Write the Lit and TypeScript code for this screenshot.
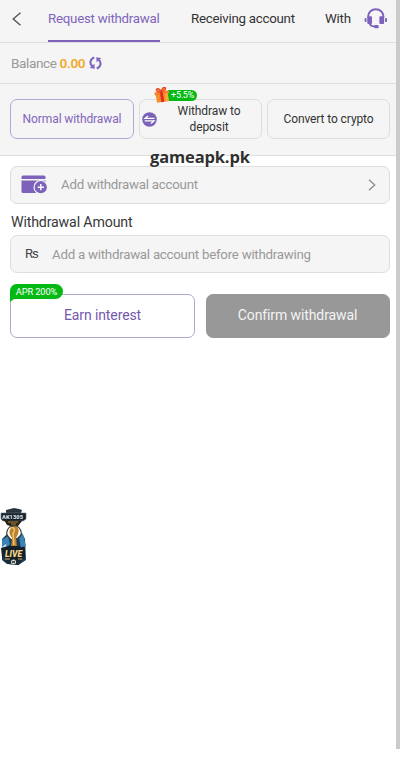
import { LitElement, html, css, svg } from "lit";
import { customElement } from "lit/decorators.js";

const backIcon = svg`<svg class="back" width="10" height="14" viewBox="0 0 10 14" fill="none" stroke="#555" stroke-width="1.4"><path d="M8.5 .8 1.2 7l7.3 6.2"/></svg>`;
const headsetIcon = svg`<svg class="headset" width="24" height="22" viewBox="0 0 24 22"><path d="M4.2 9.5V8.2a7.6 7 0 0 1 15.2 0v1.3M5.500 14.500c.3 3 1.800 4 5.500 4" fill="none" stroke="#7d62bb" stroke-width="1.900"/><g fill="#7d62bb"><rect x="3.300" y="8.300" width="4.700" height="7.700" rx="1"/><rect x="15.400" y="8.300" width="4.700" height="7.700" rx="1"/><rect x=".6" y="10" width="2" height="4" rx=".9"/><rect x="21" y="10" width="2" height="4" rx=".9"/><rect x="10" y="17" width="4.800" height="3.200" rx="1.500"/></g></svg>`;
const refreshIcon = svg`<svg class="refresh" width="13" height="14" viewBox="0 0 13 14"><g fill="none" stroke="#7d67bc" stroke-width="2.100"><path d="M5.300 1.600C1.300 2.800.1 7.200 3.300 10.300"/><path d="M7.700 12.400C11.700 11.200 12.900 6.800 9.700 3.700"/></g><path d="m.8 12.100 4.900.7-.3-5.100ZM12.200 1.900l-4.900-.7.300 5.100Z" fill="#7d67bc"/></svg>`;
const swapIcon = svg`<svg width="15" height="15" viewBox="0 0 15 15"><circle cx="7.500" cy="7.500" r="7.300" fill="#7b62b9"/><path d="M12.500 6.400H3.100L6 3.900M2.700 8.900h9.200L9 11.400" fill="none" stroke="#fff" stroke-width="1.300"/></svg>`;
const giftIcon = svg`<svg class="gift" width="17" height="16" viewBox="0 0 17 16"><g transform="rotate(-9 8 9)"><path d="M2 6h12v9H2z" fill="#fb8a29"/><path d="M11 6h3v9h-3z" fill="#f9aa37"/><path d="M1 4.300h14.500v3.200H1z" fill="#f98127"/><path d="M6.500 4h2.800v11H6.500z" fill="#d92c25"/><path d="M8 4.500C3 5 2.600 1.500 4.300 1.100 6 .8 7.300 2.800 8 4.500 8.700 2.300 10.500.3 12 .9c1.900 1-.2 3.700-4 3.600Z" fill="#f8922b" stroke="#e4452a" stroke-width="1.300"/></g></svg>`;
const walletIcon = svg`<svg class="wallet" width="27" height="19" viewBox="0 0 27 19"><g fill="#7d62bb"><path d="M.5 4V2A1.500 1.500 0 0 1 2 .5h21A1.500 1.500 0 0 1 24.500 2v2Z"/><path d="M.5 5.400h24v11a1.500 1.500 0 0 1-1.500 1.500H2a1.500 1.500 0 0 1-1.500-1.500Z"/></g><circle cx="19.800" cy="12.200" r="7.300" fill="#f5f5f5"/><circle cx="19.800" cy="12.200" r="6.100" fill="#7d62bb"/><path d="M16.700 12.200H23M19.800 9v6.300" stroke="#fff" stroke-width="1.400"/></svg>`;
const chevronIcon = svg`<svg class="chevron" width="8" height="12" viewBox="0 0 8 12" fill="none" stroke="#888" stroke-width="1.200"><path d="m1 .7 5.800 5.300L1 11.300"/></svg>`;

const promoArt = svg`<svg width="27" height="58" viewBox="0 0 27 58">
<path d="M2 31 7 26l4 5 6-1 5-5 3 6 1 21-6 4H7l-5-4Z" fill="#173b5b"/>
<path d="m2 32 6-4 2 8-5 6-3-4Zm17-3 4-3 3 12-5 3Z" fill="#3984b5"/>
<path d="m2 39 4-3 1 5-4 2Zm19-1 4 2-2 5-3-3Z" fill="#cfe4eb"/>
<path d="m6 2 4-1 4-1 5 1 3 1-1 3H6Z" fill="#29343b"/>
<path d="M1 5h25v6l-3 2H3l-2-2Z" fill="#14222c" stroke="#647078" stroke-width=".6"/>
<path d="m4 12 18 1-4 5-5 1-6-2Z" fill="#272318"/><path d="M8 14h10m-7 2h5" stroke="#ad8540"/>
<circle cx="14" cy="25" r="7.300" fill="none" stroke="#4b4634" stroke-width="1.200"/>
<path d="M11 20c1-2 5-2 7 0 2 4-1 8-2 10l1 9h-6l1-9c-2-3-4-6-1-10Z" fill="#bd822d"/>
<path d="M12 20c2-1 3 1 2 4l-1 2 1 11" fill="none" stroke="#f1c974" stroke-width="1.400"/>
<path d="m1 40 7-2h9l8 1v11l-5 1-6 3-5-3-7-2Z" fill="#15202a"/>
<path d="M4 52h18l-3 5h-5l-6-1Z" fill="#1a2b34"/>
<path d="M5 51h5m8 0h4" stroke="#d1a13e"/><circle cx="13.500" cy="54" r="2.500" fill="#dce3df"/><path d="m12 53 3 2m0-2-3 2" stroke="#25282a"/>
<text x="2" y="10.600" textLength="21" lengthAdjust="spacingAndGlyphs" font-family="Roboto" font-weight="900" font-size="6" fill="#d4dce0">AK1305</text>
<text x="5" y="48.500" textLength="17" lengthAdjust="spacingAndGlyphs" font-family="Roboto" font-weight="900" font-style="italic" font-size="9" fill="#f4d688">LIVE</text></svg>`;

@customElement("app-root")
export class AppRoot extends LitElement {
  static styles = css`
    :host { display: block; height: 781px; position: relative; overflow: hidden; background: #fff; font-family: Roboto, "Noto Sans", sans-serif; color: #333; }
    * { box-sizing: border-box; }
    svg { display: block; flex: none; }
    .page { width: 396px; }
    .header { height: 43px; display: flex; background: #f5f5f5; border-bottom: 1px solid #dedede; padding-left: 12px; }
    .back { margin-top: 12px; }
    .nav { display: flex; width: 304px; margin-left: 26px; gap: 31px; overflow: hidden; white-space: nowrap; font-size: 13.300px; letter-spacing: -.25px; line-height: 37px; }
    .nav span { flex: none; height: 42px; }
    .nav .on { color: #8066bc; border-bottom: 2px solid #7d62bb; width: 112px; }
    .nav .receiving { width: 103px; }
    .headset { margin: 8px 0 0 12px; }
    .balance { height: 41px; display: flex; align-items: center; padding-left: 11px; background: #f5f5f5; border-bottom: 1px solid #ddd; font-size: 13.600px; letter-spacing: -.4px; color: #999; }
    .balance span, .balance b { padding-bottom: 1px; }
    .balance b { font-weight: 600; color: #f3aa2b; margin-left: 3px; }
    .refresh { margin-left: 4px; }
    .methods { height: 72px; display: grid; grid-template-columns: 124px 123px 123px; gap: 5px; padding: 15px 0 0 10px; background: #f5f5f5; border-bottom: 1px solid #ddd; }
    .method { height: 40px; border: 1px solid #dedede; border-radius: 7px; display: flex; align-items: center; justify-content: center; text-align: center; font-size: 12px; letter-spacing: -.1px; line-height: 16.500px; position: relative; }
    .method.on { border-color: #b4a7d4; color: #8066bc; }
    .deposit { justify-content: flex-start; padding-left: 2px; }
    .deposit span { width: 106px; }
    .bonus { position: absolute; left: 14px; top: -13px; display: flex; }
    .bonus i { font-style: normal; height: 11px; width: 29px; margin: 3px 0 0 -3px; border-radius: 0 6px 6px 0; background: #05b914; color: #fff; font-size: 9px; line-height: 11px; letter-spacing: -.25px; }
    .gift { position: relative; z-index: 1; }
    .watermark { position: absolute; left: 150px; top: 145px; font: 700 16.500px/24px "Open Sans", sans-serif; letter-spacing: -.15px; color: #303030; white-space: nowrap; }
    .form { padding: 10px 6px 0 10px; }
    .field { height: 38px; border: 1px solid #dedede; border-radius: 7px; background: #f5f5f5; display: flex; align-items: center; color: #999; font-size: 13.300px; letter-spacing: -.25px; }
    .field.account { padding-bottom: 1px; }
    .wallet { margin-left: 10px; margin-right: 13px; }
    .chevron { margin-left: auto; margin-right: 13px; }
    .label { font-size: 14.200px; letter-spacing: -.16px; line-height: 18px; height: 31px; padding: 9px 0 0 1px; color: #383838; }
    .rs { width: 27px; margin-left: 14px; color: #444; font-size: 13px; padding-bottom: 2px; }
    .actions { display: grid; grid-template-columns: 185px 184px; gap: 11px; margin-top: 21px; }
    .button { height: 44px; border: 1px solid #b0a8cb; border-radius: 7px; display: flex; align-items: center; justify-content: center; padding-bottom: 3px; font-size: 14px; letter-spacing: -.1px; color: #7658ad; position: relative; }
    .confirm { border-color: #989898; background: #989898; color: #f3f3f3; padding-right: 1px; }
    .apr { position: absolute; left: -1px; top: -11px; width: 53px; height: 15px; border-radius: 7px 8px 8px 0; background: #05b914; color: #fff; font-size: 9.300px; line-height: 15px; text-align: center; }
    .apr::after { content: ""; position: absolute; left: 0; top: 15px; border-top: 3px solid #05b914; border-right: 4px solid transparent; }
    .promo { position: absolute; left: 0; top: 508px; }
    .scrollbar { position: absolute; right: 0; top: 0; width: 4px; height: 749px; background: #cbcbcb; }
  `;

  render() {
    return html`
      <div class="page">
        <header class="header">${backIcon}
          <nav class="nav"><span class="on">Request withdrawal</span><span class="receiving">Receiving account</span><span>With</span></nav>
          ${headsetIcon}
        </header>
        <div class="balance"><span>Balance</span><b>0.00</b>${refreshIcon}</div>
        <section class="methods">
          <div class="method on">Normal withdrawal</div>
          <div class="method deposit">${swapIcon}<span>Withdraw to<br>deposit</span><div class="bonus">${giftIcon}<i>+5.5%</i></div></div>
          <div class="method">Convert to crypto</div>
        </section>
        <main class="form">
          <div class="field account">${walletIcon}<span>Add withdrawal account</span>${chevronIcon}</div>
          <div class="label">Withdrawal Amount</div>
          <div class="field"><span class="rs">₨</span><span>Add a withdrawal account before withdrawing</span></div>
          <div class="actions"><div class="button"><span class="apr">APR 200%</span>Earn interest</div><div class="button confirm">Confirm withdrawal</div></div>
        </main>
      </div>
      <div class="watermark">gameapk.pk</div>
      <div class="promo">${promoArt}</div>
      <div class="scrollbar"></div>`;
  }
}
